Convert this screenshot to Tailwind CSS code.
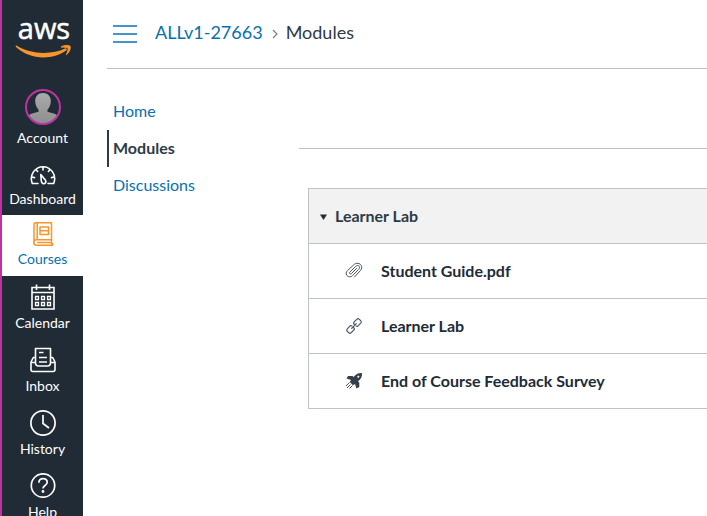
<!DOCTYPE html>
<html lang="en">
<head>
<meta charset="utf-8">
<meta name="viewport" content="width=device-width, initial-scale=1">
<title>Modules</title>
<script src="https://cdn.jsdelivr.net/npm/@tailwindcss/browser@4"></script>
</head>
<body class="flex h-screen overflow-hidden bg-white font-['Lato',sans-serif] text-[#2d3b45]">
<nav aria-label="Global" class="flex w-[83px] shrink-0 flex-col border-l-2 border-[#bf32a4] bg-[#212b36] text-sm leading-5 text-white">
  <a href="#" class="flex h-20 shrink-0 items-start justify-center" aria-label="AWS">
    <svg viewBox="0 -16 60 64" class="h-16 w-[60px]">
      <text x="31" y="23" text-anchor="middle" font-family="Open Sans, Noto Sans, sans-serif" font-weight="500" font-size="29" fill="#fff" stroke="#fff" stroke-width=".5">aws</text>
      <path d="M3.500 29.500C17 38.500 39 39 52 32.500c1.500-.6 2.500 1 1.200 2C39 44.500 17 44 3 31c-.8-.8-.3-1.800.5-1.500z" fill="#f7962a"/>
      <path d="M48 31c3-2 8-2 9-.8 1 1.200-.5 6-3.500 8.500 1-3 2-5.500 1.500-6.500s-4-1-7-1.200z" fill="#f7962a" stroke="#f7962a" stroke-width="1"/>
    </svg>
  </a>
  <a href="#" class="flex shrink-0 flex-col items-center gap-[3px] pt-[9px] pb-1.5">
    <svg viewBox="0 0 36 36" class="size-9">
      <defs><clipPath id="avatar"><circle cx="18" cy="18" r="16.500"/></clipPath><linearGradient id="grey" x2="0" y2="1"><stop stop-color="#aaa"/><stop offset="1" stop-color="#8d8d8d"/></linearGradient></defs>
      <g clip-path="url(#avatar)" fill="url(#grey)"><path d="M18 4c-5 0-8 3.500-7.800 8.500.1 3 1.300 6 3.300 8.200v2C9 24 3 24.500 1 30v6h34v-6c-2-5.500-8-6-12.500-7.300v-2c2-2.200 3.200-5.200 3.300-8.200C26 7.500 23 4 18 4z"/></g>
      <circle cx="18" cy="18" r="17" fill="none" stroke="#bf32a4" stroke-width="2"/>
    </svg>
    Account
  </a>
  <a href="#" class="flex shrink-0 flex-col items-center gap-[3px] pt-2 pb-1.5">
    <svg viewBox="0 0 26 24" class="h-6 w-[26px]" fill="none" stroke="#fff" stroke-width="1.600" stroke-linejoin="round" stroke-linecap="round">
      <path d="M8 21.500H2.300C-1 13 5 4.700 13 4.700S27 13 23.700 21.500H18M13 5v3M6 7.500l1.600 2M20 7.500l-1.600 2M2 15l2.500.6M24 15l-2.500.6"/>
      <path d="M10.800 12.500l4.500 5.500c1.600 2.200-.6 4.300-2.500 3.500-1.600-.7-1.500-2-1.600-3.600z"/>
    </svg>
    Dashboard
  </a>
  <a href="#" aria-current="page" class="flex shrink-0 flex-col items-center gap-[3px] bg-white pt-[7px] pb-[7px] text-[#0770b0]">
    <svg viewBox="0 0 24 24" class="size-6" fill="none" stroke="#f7962a" stroke-width="1.500" stroke-linejoin="round">
      <path d="M4.500.8h16v17H5.500a2.700 2.700 0 0 0 0 5.400h16v-1.400h-1V17.800M3 20.500V2.300C3 1.300 3.500.8 4.500.8M6.200 1v16.500M6 20.500h14.300"/>
      <path d="M9 5h8.500v7.500H9zM9 8.800h8.500"/>
    </svg>
    Courses
  </a>
  <a href="#" class="flex shrink-0 flex-col items-center gap-[3px] pt-2 pb-1.5">
    <svg viewBox="0 0 26 26" class="size-[26px]" fill="none" stroke="#fff" stroke-width="1.600">
      <path d="M2 3.500h22v21.500H2zM2 8.500h22M6.500.5V6M19.500.5V6"/>
      <path d="M5.500 12.500h3v3h-3zM11.500 12.500h3v3h-3zM17.500 12.500h3v3h-3zM5.500 18.500h3v3h-3zM11.500 18.500h3v3h-3zM17.500 18.500h3v3h-3z" stroke-width="1.300"/>
    </svg>
    Calendar
  </a>
  <a href="#" class="flex shrink-0 flex-col items-center gap-[3px] pt-2 pb-1.5">
    <svg viewBox="0 0 26 26" class="size-[26px]" fill="none" stroke="#fff" stroke-width="1.600" stroke-linejoin="round">
      <path d="M5.500 16V1.500h15V16M5.500 10.500H3.300L1 15v7.500c0 1.300.7 2 2 2h20c1.300 0 2-.7 2-2V15l-2.300-4.500h-2.200M1 15.500h4.500c0 2.500.8 3.500 3 3.500h9c2.200 0 3-1 3-3.500H25"/>
      <path d="M9 5.500h4.500M9 10.500h8M9 15h8"/>
    </svg>
    Inbox
  </a>
  <a href="#" class="flex shrink-0 flex-col items-center gap-[3px] pt-2 pb-1.5">
    <svg viewBox="0 0 26 26" class="size-[26px]" fill="none" stroke="#fff" stroke-width="1.700"><circle cx="13" cy="13" r="12.100"/><path d="M13 5v8.500l6 4.500"/></svg>
    History
  </a>
  <a href="#" class="flex shrink-0 flex-col items-center gap-[3px] pt-2 pb-1.5">
    <svg viewBox="0 0 26 26" class="size-[26px]" fill="none" stroke="#fff" stroke-width="1.700"><circle cx="13" cy="12.500" r="11.700"/><path d="M8.900 9.800c0-2.700 1.700-4.200 4.100-4.200s4.200 1.500 4.200 3.700c0 3.400-4.200 3-4.200 6.200"/><circle cx="13" cy="18.500" r=".6"/></svg>
    Help
  </a>
</nav>
<div class="min-w-0 flex-1 pl-6">
  <header class="flex h-[69px] items-center border-b border-[#bcc4c7] pb-1 pl-1.5 text-lg leading-6">
    <button type="button" aria-label="Toggle course navigation" class="mt-1 flex w-6 flex-col gap-1.5">
      <span class="h-0.5 w-full bg-[#4596c7]"></span><span class="h-0.5 w-full bg-[#4596c7]"></span><span class="h-0.5 w-full bg-[#4596c7]"></span>
    </button>
    <a href="#" class="ml-[18px] text-[#0770b0]">ALLv1-27663</a>
    <svg viewBox="0 0 6 10" class="mt-1 ml-[9px] h-2.5 w-1.5" fill="none" stroke="#73818c" stroke-width="1.200"><path d="M1 1l4 4-4 4"/></svg>
    <span class="ml-2">Modules</span>
  </header>
  <div class="flex">
    <nav aria-label="Course" class="flex w-48 shrink-0 flex-col pt-6 text-base leading-[35px] text-[#0770b0]">
      <a href="#" class="pb-0.5 pl-1.5">Home</a>
      <a href="#" aria-current="page" class="border-l-2 border-[#2d3b45] pb-0.5 pl-1 font-bold text-[#2d3b45]">Modules</a>
      <a href="#" class="pb-0.5 pl-1.5">Discussions</a>
    </nav>
    <main class="min-w-0 flex-1 pt-[79px]">
      <hr class="border-[#bcc4c7]">
      <section class="mt-[39px] ml-[9px] border border-r-0 border-[#bcc4c7] font-bold text-[#212b36]">
        <h2><button type="button" aria-expanded="true" class="flex h-[54px] w-full items-center gap-2 bg-[#f2f2f2] pl-[11px] text-[#2d3b45]">
          <svg viewBox="0 0 7 6" class="mt-0.5 h-1.5 w-[7px]"><path d="M0 .5h7L3.500 6z" fill="#212b36"/></svg>Learner Lab</button></h2>
        <ul>
          <li class="flex h-[55px] items-center gap-[18px] border-t border-[#bcc4c7] pl-9">
            <svg viewBox="0 0 18 18" class="size-[18px]" fill="none" stroke="#4b5660" stroke-width="1" stroke-linecap="round"><path d="M11.500 6.500l-5 5c-1.200 1.200-2.700-.3-1.500-1.500L10.500 4.500c2.600-2.600 5.700.4 3.100 3L7.500 13.600C4 17-1.400 12.500 2.500 8.600L8.500 3c4.500-4.500 11 .8 7 5.500L9.500 15"/></svg>
            <a href="#">Student Guide.pdf</a></li>
          <li class="flex h-[55px] items-center gap-[18px] border-t border-[#bcc4c7] pl-9">
            <svg viewBox="0 0 18 18" class="size-[18px]" fill="none" stroke="#4b5660" stroke-width="1.200" stroke-linecap="round" stroke-linejoin="round"><path d="M9.500 7.700C8.300 6.500 8.500 5.600 9.200 4.900l2.600-2.600c.8-.8 1.700-.8 2.500 0l1.400 1.400c.8.800.8 1.700 0 2.500l-2.600 2.600c-.6.600-1.300.6-2 .2M8.500 10.300c1.200 1.200 1 2.100.3 2.800l-2.600 2.600c-.8.800-1.700.8-2.500 0l-1.400-1.400c-.8-.8-.8-1.700 0-2.500l2.600-2.600c.6-.6 1.300-.6 2-.2M6.700 11.300l4.600-4.600"/></svg>
            <a href="#">Learner Lab</a></li>
          <li class="flex h-[55px] items-center gap-[18px] border-t border-[#bcc4c7] pl-9">
            <svg viewBox="0 0 18 18" class="size-[18px]"><path fill="#33404b" fill-rule="evenodd" d="M17 1c-3-.2-5 .6-7 2.500L8.500 5 7.500 4H3L1.500 6.500 6 8 4.800 10 8 13.200l2-1.200L11.500 16.500l2.800-1.500v-4.500L13 9.500C16 7 17.300 4.500 17 1zM12 4.700l1.500-1.200 1 1-1.200 1.500z"/><path d="M4.500 10.500L1 14M5.500 12.500L2 16M7.500 13.500L4.500 16.500" fill="none" stroke="#4b5660" stroke-width="1"/></svg>
            <a href="#">End of Course Feedback Survey</a></li>
        </ul>
      </section>
    </main>
  </div>
</div>
</body>
</html>
